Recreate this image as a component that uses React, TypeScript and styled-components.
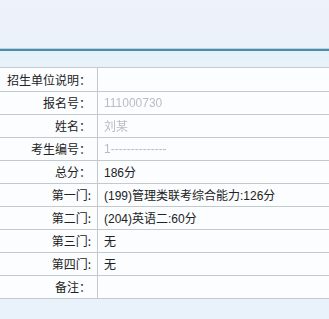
import styled, { createGlobalStyle } from "styled-components";

const GlobalStyle = createGlobalStyle`
	html, body {
		margin: 0;
		padding: 0;
		background: #e9f1fb;
		font-family: "Liberation Sans", "Noto Sans CJK SC", sans-serif;
	}
`;

const Page = styled.div`
	width: 329px;
	height: 319px;
	overflow: hidden;
	background: #e9f1fb;
`;

const TopArea = styled.div`
	height: 48px;
	background: linear-gradient(#eef2fa, #ecf2fa);
`;

const Rule = styled.div`
	height: 3px;
	border-top: 1px solid #b4d6e6;
	background: #4f8aa6;
	box-sizing: border-box;
`;

const Band = styled.div`
	height: 16px;
	background: linear-gradient(#e3f1f9, #e9f2f8);
	border-bottom: 1px solid #c5cbd0;
`;

const Table = styled.table`
	width: 100%;
	border-collapse: collapse;
	font-size: 12px;
	color: #222;
`;

const Row = styled.tr`
	height: 23px;
	border-bottom: 1px solid #c4c9ce;
	background: #fbfdff;
`;

const Label = styled.td`
	width: 91px;
	padding: 0 6px 0 0;
	text-align: right;
	border-right: 1px solid #c4c9ce;
	white-space: nowrap;
	font-family: "Noto Sans CJK SC", sans-serif;
`;

const Value = styled.td<{ $muted?: boolean }>`
	padding: 0 0 0 6px;
	white-space: nowrap;
	font-family: "Liberation Sans", "Noto Sans CJK SC", sans-serif;
	color: ${(p) => (p.$muted ? "#b9bcc2" : "#222")};
	filter: ${(p) => (p.$muted ? "blur(0.7px)" : "none")};
`;

const rows: { label: string; value: string; muted?: boolean }[] = [
	{ label: "招生单位说明：", value: "", muted: true },
	{ label: "报名号：", value: "111000730", muted: true },
	{ label: "姓名：", value: "刘某", muted: true },
	{ label: "考生编号：", value: "1--------------", muted: true },
	{ label: "总分：", value: "186分" },
	{ label: "第一门:", value: "(199)管理类联考综合能力:126分" },
	{ label: "第二门:", value: "(204)英语二:60分" },
	{ label: "第三门:", value: "无" },
	{ label: "第四门:", value: "无" },
	{ label: "备注：", value: "" },
];

const App = () => {
	return (
		<Page>
			<GlobalStyle />
			<TopArea />
			<Rule />
			<Band />
			<Table>
				<tbody>
					{rows.map((r) => (
						<Row key={r.label}>
							<Label>{r.label}</Label>
							<Value $muted={r.muted}>{r.value}</Value>
						</Row>
					))}
				</tbody>
			</Table>
		</Page>
	);
};

export default App;
